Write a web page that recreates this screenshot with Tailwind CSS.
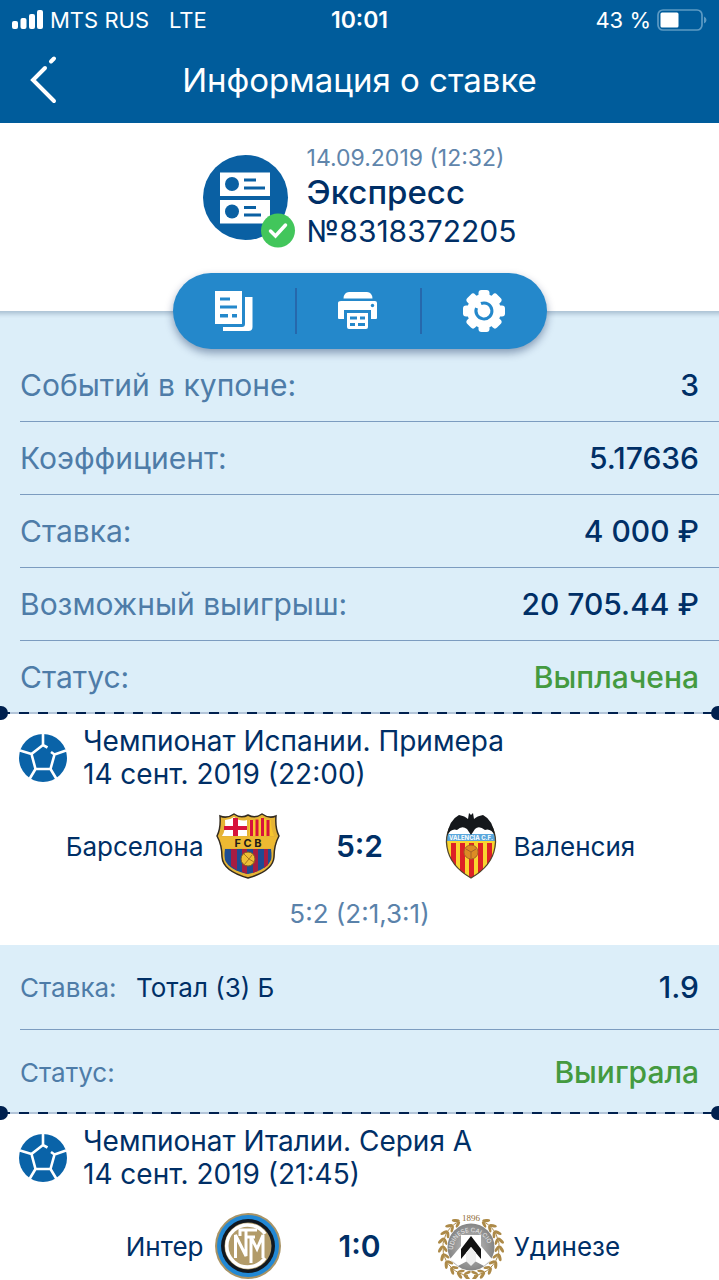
<!DOCTYPE html>
<html lang="ru">
<head>
    <meta charset="UTF-8">
    <meta name="viewport" content="width=device-width, initial-scale=1.0">
    <title>Информация о ставке</title>
    <script src="https://cdn.jsdelivr.net/npm/@tailwindcss/browser@4"></script>
</head>
<body class="bg-white font-['Inter','Liberation_Sans',sans-serif] text-[#002f66] overflow-x-hidden">
    <!-- Shared sprite -->
    <svg class="hidden">
        <symbol id="ball" viewBox="0 0 48 48">
            <circle cx="24" cy="24" r="24" fill="#0a63a8"/>
            <path d="M28.500 13.500 24 11 12.500 20 16.500 35H31.500L35.500 20.500 32 18M24 0V11M1 16.500 12.500 20M47 16.500 35.500 20.500M16.500 35 10.500 45M31.500 35 37.500 45" fill="none" stroke="#fff" stroke-width="2.600"/>
        </symbol>
    </svg>

    <header class="bg-[#005c9b] text-white h-[123px]">
        <div class="relative h-10 px-3 flex items-center justify-between text-[22px]">
            <div class="flex items-center">
                <svg class="w-8 h-5 mr-1.5" viewBox="0 0 32 20" fill="#fff">
                    <rect x="0" y="11" width="6" height="8" rx="2"/>
                    <rect x="8.500" y="8" width="6" height="11" rx="2"/>
                    <rect x="17" y="4" width="6" height="15" rx="2"/>
                    <rect x="25" y="0" width="6" height="19" rx="2"/>
                </svg>
                <span>MTS RUS</span>
                <span class="ml-5">LTE</span>
            </div>
            <span class="absolute left-1/2 -translate-x-1/2 text-[23px] font-semibold">10:01</span>
            <div class="flex items-center gap-1.5">
                <span>43 %</span>
                <svg class="w-[50px] h-[22px]" viewBox="0 0 50 22">
                    <rect x="1" y="1" width="44" height="20" rx="5" fill="none" stroke="#5c9ac4" stroke-width="1.700"/>
                    <rect x="3.500" y="3.500" width="18" height="15" rx="1.500" fill="#fff"/>
                    <path d="M47 7.500q2.500 1 2.500 3.500T47 14.500z" fill="#5c9ac4"/>
                </svg>
            </div>
        </div>
        <div class="relative h-[81px] flex items-center justify-center">
            <button type="button" aria-label="Назад" class="absolute left-7 top-3">
                <svg class="w-8 h-[52px]" viewBox="0 0 32 52" fill="none" stroke="#fff" stroke-width="4" stroke-linecap="round">
                    <path d="M17 16 5 28 26 49M23 9.500 26 6.500"/>
                </svg>
            </button>
            <h1 class="text-[33px]">Информация о ставке</h1>
        </div>
    </header>

    <section class="h-[188px] pt-5 flex justify-center items-start gap-2.5">
        <svg class="w-[94px] h-[94px] mt-3" viewBox="0 0 94 94">
            <circle cx="42.500" cy="42.500" r="42.500" fill="#0a60a3"/>
            <path d="M17 17.500h50V41H17zM17 45h50v23.500H17z" fill="#fff"/>
            <g fill="#0a60a3">
                <circle cx="29" cy="29" r="7"/>
                <circle cx="29" cy="56.500" r="7"/>
                <path d="M41 23.500h12v3H41zM41 31.500h21v3H41zM41 51h12v3H41zM41 58.500h17v3H41z"/>
            </g>
            <circle cx="75" cy="75.500" r="17" fill="#42c65b"/>
            <path d="m67.500 76 5 5L82.500 70" fill="none" stroke="#fff" stroke-width="3.500" stroke-linecap="round"/>
        </svg>
        <div>
            <p class="text-[23px] leading-[30px] text-[#6085ab]">14.09.2019 (12:32)</p>
            <p class="text-[33px] leading-[39px] font-medium">Экспресс</p>
            <p class="text-[30px] leading-[38px]">№8318372205</p>
        </div>
    </section>

    <section class="bg-[#dceef9] shadow-[inset_0_7px_4px_-4px_rgba(0,40,80,0.22)]">
        <div class="relative -top-[38px] -mb-[38px] w-[374px] h-[76px] mx-auto rounded-full bg-[#2488cb] shadow-[0_4px_8px_rgba(0,30,80,0.4)] grid grid-cols-3 items-center divide-x-2 divide-[#2668ac]">
            <button type="button" aria-label="Копировать" class="h-[46px] flex items-center justify-center">
                <svg class="w-[38px] h-10" viewBox="0 0 38 40">
                    <path d="M0 0h27v33H0zM30 6h7.500v30q0 4-4 4H8v-4h19q3 0 3-3z" fill="#fff"/>
                    <path d="M5 6.500h10v3H5zM5 14.500h17v3H5zM5 23h8v3.500H5zM17 23h5v3.500h-5z" fill="#2488cb"/>
                </svg>
            </button>
            <button type="button" aria-label="Печать" class="h-[46px] flex items-center justify-center">
                <svg class="w-10 h-[38px]" viewBox="0 0 40 38">
                    <path d="M5.500 6.500Q6 0 11 0h18q5 0 5.500 6.500zM3 9h34q2 0 2 2v15q0 1-1 1h-5V18H6v9H1q-1 0-1-1V11q0-2 3-2zM9 21h21v14q0 2-2 2H11q-2 0-2-2z" fill="#fff"/>
                    <circle cx="34.500" cy="13.500" r="1.700" fill="#2488cb"/>
                    <path d="M12 24.500h7v3h-7zM22 24.500h5v3h-5zM12 31h5v3h-5zM20 31h7v3h-7z" fill="#2488cb"/>
                </svg>
            </button>
            <button type="button" aria-label="Настройки" class="h-[46px] flex items-center justify-center">
                <svg class="w-[42px] h-[42px]" viewBox="-21 -21 42 42">
                    <g fill="#fff">
                        <circle r="17"/>
                        <rect x="-5.500" y="-21" width="11" height="42" rx="3"/>
                        <rect x="-5.500" y="-21" width="11" height="42" rx="3" transform="rotate(45)"/>
                        <rect x="-5.500" y="-21" width="11" height="42" rx="3" transform="rotate(90)"/>
                        <rect x="-5.500" y="-21" width="11" height="42" rx="3" transform="rotate(135)"/>
                    </g>
                    <path d="M-3-7.500A8 8 0 1 1-7.500-3" fill="none" stroke="#2488cb" stroke-width="3"/>
                </svg>
            </button>
        </div>
        <dl class="pl-5 text-[30px]">
            <div class="h-[73px] pr-5 flex items-center justify-between border-b border-[#7c9cc0]">
                <dt class="text-[#4e7ca8]">Событий в купоне:</dt>
                <dd class="font-medium">3</dd>
            </div>
            <div class="h-[73px] pr-5 flex items-center justify-between border-b border-[#7c9cc0]">
                <dt class="text-[#4e7ca8]">Коэффициент:</dt>
                <dd class="font-medium">5.17636</dd>
            </div>
            <div class="h-[73px] pr-5 flex items-center justify-between border-b border-[#7c9cc0]">
                <dt class="text-[#4e7ca8]">Ставка:</dt>
                <dd class="font-medium">4 000 ₽</dd>
            </div>
            <div class="h-[73px] pr-5 flex items-center justify-between border-b border-[#7c9cc0]">
                <dt class="text-[#4e7ca8]">Возможный выигрыш:</dt>
                <dd class="font-medium">20 705.44 ₽</dd>
            </div>
            <div class="h-[73px] pr-5 flex items-center justify-between">
                <dt class="text-[#4e7ca8]">Статус:</dt>
                <dd class="font-medium text-[#449a40]">Выплачена</dd>
            </div>
        </dl>
    </section>

    <!-- Event 1 -->
    <article class="relative">
        <div class="absolute inset-x-0 -top-0.5 h-0.5 bg-[repeating-linear-gradient(to_right,#00204f_0_10px,#b4c6da_10px_19px)]"></div>
        <span class="absolute -left-1.5 -top-2 size-3.5 rounded-full bg-[#00204f]"></span>
        <span class="absolute -right-1.5 -top-2 size-3.5 rounded-full bg-[#00204f]"></span>
        <div class="pt-[11px] pl-[19px] flex items-center gap-4">
            <svg class="size-12"><use href="#ball"/></svg>
            <h2 class="text-[28px] leading-[33px]">Чемпионат Испании. Примера<br>14 сент. 2019 (22:00)</h2>
        </div>
        <div class="mt-[22px] grid grid-cols-[1fr_160px_1fr] items-center text-[26px]">
            <div class="flex items-center justify-end gap-3">
                <span>Барселона</span>
                <svg class="w-16 h-[66px]" viewBox="0 0 64 66">
                    <path d="M4 3Q11 6 18 1q7 5 14 1 7 4 14-1 7 5 14 2-1 12 3 20Q58 32 58 44 57 58 32 65 7 58 6 44 6 32 1 23 5 15 4 3z" fill="#e5b436" stroke="#332b20" stroke-width="1.500"/>
                    <path d="M9 7q5 0 9-3 6 5 13 3v16H6Q10 17 9 7z" fill="#fff"/>
                    <path d="M17 5h5v8h9v4h-9v6h-5v-6H8v-4h9z" fill="#d7133c"/>
                    <path d="M33 7q7 1 13-3 4 4 9 3 0 9 3 16H33z" fill="#f7c62d"/>
                    <path d="M34 7h3v16h-3zM39.500 6.500h3V23h-3zM45 5h3v18h-3zM50.500 7h3v16h-3z" fill="#d7133c"/>
                    <path d="M9 36h46q1 8 0 11-4 10-23 14Q13 57 9 47q-1-5 0-11z" fill="#1d4c93"/>
                    <path d="M15 36h6v21l-6-4zM26 36h5v25l-5-2zM37 36h5v22l-5 2zM48 36h4v16l-4 3z" fill="#a51d42"/>
                    <circle cx="32" cy="46" r="7" fill="#edbf35" stroke="#7c5c20"/>
                    <path d="m28 41 5 5-5 6M36 42l-3 4 5 3" fill="none" stroke="#a47520"/>
                    <path d="M3 24h58l-4 11H7z" fill="#edb932"/>
                    <text x="32" y="34" text-anchor="middle" class="font-bold text-[11px]" fill="#221c18">F C B</text>
                </svg>
            </div>
            <strong class="text-center text-[30px] font-semibold">5:2</strong>
            <div class="flex items-center gap-2.5">
                <svg class="w-16 h-[66px]" viewBox="0 0 64 66">
                    <defs>
                        <clipPath id="vcf"><path d="M10 14Q31 8 52 14 57 24 55 34 52 53 31 65 10 53 7 34 5 24 10 14z"/></clipPath>
                    </defs>
                    <g clip-path="url(#vcf)">
                        <path d="M0 0h64v66H0z" fill="#f9d52f"/>
                        <path d="M11 30h5v36h-5zM20 30h5v36h-5zM29 30h5v36h-5zM38 30h5v36h-5zM47 30h5v36h-5z" fill="#dd2226"/>
                        <path d="M0 8h64v13H0z" fill="#fff"/>
                        <path d="M0 21h64v7H0z" fill="#5aa7dc"/>
                    </g>
                    <path d="M10 14Q5 24 7 34 10 53 31 65 52 53 55 34 57 24 52 14" fill="none" stroke="#51452d" stroke-width="1.300"/>
                    <text x="31" y="27" text-anchor="middle" class="font-bold text-[6px]" fill="#fff">VALENCIA C.F.</text>
                    <path d="M7 23Q9 7 19 2q6 1 9 4l1-6 2 2 2-2 1 6q3-3 9-4 10 5 12 21-4-8-10-6-6-5-10-1l-4 6-4-6q-5-4-10 1-6-2-10 6z" fill="#15181b"/>
                    <circle cx="31" cy="39" r="7" fill="#dc8b25" stroke="#a76325"/>
                    <path d="m26 36 5 3 5-3M31 39v6" fill="none" stroke="#a76325"/>
                </svg>
                <span>Валенсия</span>
            </div>
        </div>
        <p class="mt-[19px] pb-[15px] text-center text-[26px] leading-8 text-[#5a82aa]">5:2 (2:1,3:1)</p>
        <dl class="bg-[#dceef9] pl-5">
            <div class="h-[85px] pr-5 flex items-center justify-between border-b border-[#7c9cc0]">
                <dt class="text-[26px] text-[#4e7ca8]">Ставка: <span class="ml-3 text-[#002f66]">Тотал (3) Б</span></dt>
                <dd class="text-[30px] font-medium">1.9</dd>
            </div>
            <div class="h-[84px] pr-5 flex items-center justify-between">
                <dt class="text-[26px] text-[#4e7ca8]">Статус:</dt>
                <dd class="text-[30px] font-medium text-[#449a40]">Выиграла</dd>
            </div>
        </dl>
    </article>

    <!-- Event 2 -->
    <article class="relative">
        <div class="absolute inset-x-0 -top-0.5 h-0.5 bg-[repeating-linear-gradient(to_right,#00204f_0_10px,#b4c6da_10px_19px)]"></div>
        <span class="absolute -left-1.5 -top-2 size-3.5 rounded-full bg-[#00204f]"></span>
        <span class="absolute -right-1.5 -top-2 size-3.5 rounded-full bg-[#00204f]"></span>
        <div class="pt-[11px] pl-[19px] flex items-center gap-4">
            <svg class="size-12"><use href="#ball"/></svg>
            <h2 class="text-[28px] leading-[33px]">Чемпионат Италии. Серия А<br>14 сент. 2019 (21:45)</h2>
        </div>
        <div class="mt-[22px] grid grid-cols-[1fr_160px_1fr] items-center text-[26px]">
            <div class="flex items-center justify-end gap-3">
                <span>Интер</span>
                <svg class="w-16 h-[66px] overflow-visible" viewBox="0 0 64 66">
                    <circle cx="32" cy="33" r="33" fill="#a89365"/>
                    <circle cx="32" cy="33" r="31" fill="#2288d4"/>
                    <circle cx="32" cy="33" r="27" fill="#111820"/>
                    <circle cx="32" cy="33" r="23.500" fill="#b29b69"/>
                    <g fill="none" stroke="#fff" stroke-width="3">
                        <path d="M49 21A21 21 0 1 0 49 45" stroke-width="3.500"/>
                        <path d="M19.500 45V22L30 43V17H41M24 23V17H30M30 24h9M35 50V24L41 36 47 22V45"/>
                    </g>
                </svg>
            </div>
            <strong class="text-center text-[30px] font-semibold">1:0</strong>
            <div class="flex items-center gap-2.5">
                <svg class="w-16 h-[66px] overflow-visible" viewBox="0 0 64 66">
                    <defs>
                        <radialGradient id="disc"><stop offset="0" stop-color="#c4c4c4"/><stop offset="1" stop-color="#858585"/></radialGradient>
                        <!-- two leaves, one to each side of the stem -->
                        <g id="leaf">
                            <ellipse cx="-1" cy="-30.500" rx="4" ry="1.600" transform="rotate(32 -1 -30.500)"/>
                            <ellipse cx="-1" cy="-26" rx="3.500" ry="1.400" transform="rotate(-32 -1 -26)"/>
                        </g>
                        <g id="branch" fill="#ad8a48">
                            <path d="M-13-25A28.500 28.500 0 0 0-3 28.500" fill="none" stroke="#ad8a48"/>
                            <use href="#leaf" transform="rotate(-28)"/>
                            <use href="#leaf" transform="rotate(-44)"/>
                            <use href="#leaf" transform="rotate(-60)"/>
                            <use href="#leaf" transform="rotate(-76)"/>
                            <use href="#leaf" transform="rotate(-92)"/>
                            <use href="#leaf" transform="rotate(-108)"/>
                            <use href="#leaf" transform="rotate(-124)"/>
                            <use href="#leaf" transform="rotate(-140)"/>
                            <use href="#leaf" transform="rotate(-156)"/>
                            <use href="#leaf" transform="rotate(-170)"/>
                        </g>
                    </defs>
                    <use href="#branch" transform="translate(31 34)"/>
                    <use href="#branch" transform="translate(31 34) scale(-1 1)"/>
                    <circle cx="31" cy="34" r="23.500" fill="url(#disc)"/>
                    <path id="arc" d="M13 37A18 18 0 0 1 49 37" fill="none"/>
                    <text class="text-[6px]" fill="#eee"><textPath href="#arc">UDINESE CALCIO</textPath></text>
                    <path d="M21 22H41V33L52 46 44 53 31 46 18 53 10 46 21 33z" fill="#fff"/>
                    <path d="M31 23 41 36V46L36 40 31 34 26 40 21 46V36z" fill="#111"/>
                    <path d="M31 34 36 40V48L31 53 26 48V40z" fill="#eee"/>
                    <text x="31" y="8" text-anchor="middle" class="font-['Liberation_Serif',serif] text-[9px]" fill="#8e6b35">1896</text>
                </svg>
                <span>Удинезе</span>
            </div>
        </div>
    </article>
</body>
</html>
